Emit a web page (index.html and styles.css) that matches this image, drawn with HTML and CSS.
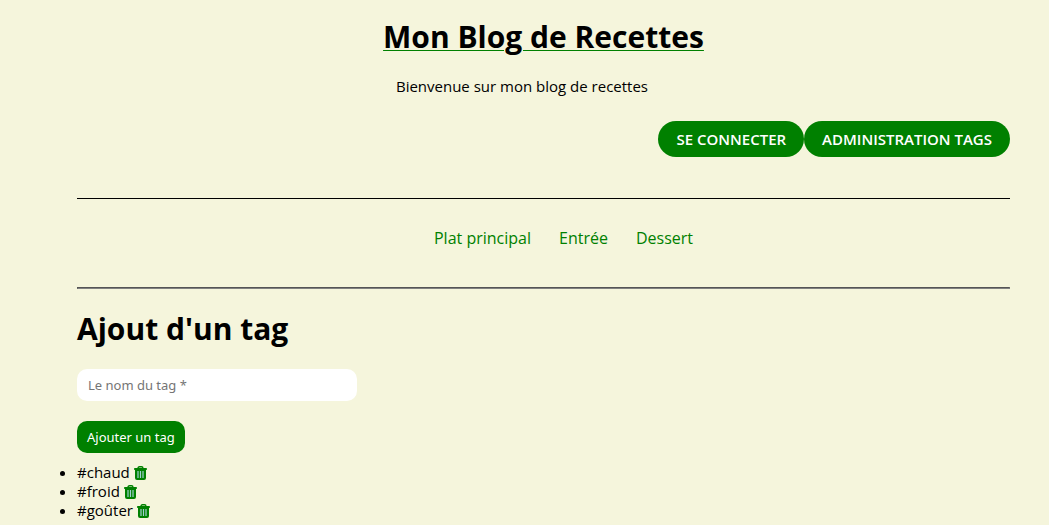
FILE: index.html
```html
<!DOCTYPE html>
<html lang="fr">
<head>
<meta charset="utf-8">
<title>Mon Blog de Recettes</title>
<link rel="stylesheet" href="styles.css">
</head>
<body>
<svg class="sprite" aria-hidden="true">
  <symbol id="trash" viewBox="0 0 13 14">
    <path d="M4 2.500Q4 .8 5.500 .8h2Q9 .8 9 2.500" fill="none" stroke="green" stroke-width="1.400"/>
    <path d="M.8 2h11.400q.8 0 .8 1t-.8 1H.8Q0 4 0 3t.8-1zM1 4h11v8q0 2-2 2H3q-2 0-2-2z" fill="green"/>
    <path d="M4 5v7M6.500 5v7M9 5v7" stroke="#9fcfd0" stroke-width="1.200"/>
  </symbol>
</svg>
<header class="header">
  <h1 class="site-title"><a href="#">Mon Blog de Recettes</a></h1>
  <p class="tagline">Bienvenue sur mon blog de recettes</p>
  <div class="actions">
    <a class="pill" href="#">Se connecter</a>
    <a class="pill" href="#">Administration tags</a>
  </div>
</header>
<nav class="nav">
  <ul class="nav-list">
    <li><a href="#">Plat principal</a></li>
    <li><a href="#">Entrée</a></li>
    <li><a href="#">Dessert</a></li>
  </ul>
</nav>
<hr class="rule">
<main>
  <h1 class="page-title">Ajout d'un tag</h1>
  <form class="form">
    <input class="field" type="text" aria-label="Le nom du tag" placeholder="Le nom du tag *">
    <button class="submit" type="submit">Ajouter un tag</button>
  </form>
  <ul class="tags">
    <li>#chaud <button class="delete" type="button" aria-label="Supprimer chaud"><svg><use href="#trash"/></svg></button></li>
    <li>#froid <button class="delete" type="button" aria-label="Supprimer froid"><svg><use href="#trash"/></svg></button></li>
    <li>#goûter <button class="delete" type="button" aria-label="Supprimer goûter"><svg><use href="#trash"/></svg></button></li>
  </ul>
</main>
</body>
</html>
```
FILE: styles.css
```css
* { box-sizing: border-box; }
body {
  margin: 0;
  padding: 18px 39px 0 77px;
  background: beige;
  color: #000;
  font: 15px/19px "Trebuchet MS", "Open Sans", sans-serif;
}
.sprite { display: none; }
.site-title, .page-title {
  margin: 0;
  font-size: 30px;
  font-weight: 700;
  line-height: 37px;
}
.site-title { text-align: center; }
.site-title a {
  color: #000;
  text-decoration-line: underline;
  text-decoration-color: #008000;
  text-decoration-thickness: 1px;
  text-underline-offset: 2px;
}
.tagline {
  margin: 22px 43px 25px 0;
  text-align: center;
}
.actions {
  display: flex;
  justify-content: flex-end;
}
.pill {
  padding: 8px 18px;
  border-radius: 20px;
  background: green;
  color: #fff;
  font-weight: 600;
  line-height: 20px;
  text-decoration: none;
  text-transform: uppercase;
}
.header {
  padding-bottom: 41px;
  border-bottom: 1px solid #000;
}
.nav { padding: 30px 0 39px; }
.nav-list {
  display: flex;
  justify-content: center;
  gap: 28px;
  margin: 0;
  padding: 0 0 0 40px;
  font-size: 16px;
  list-style: none;
}
.nav-list a { color: green; text-decoration: none; }
.rule {
  margin: 0;
  border: 1px solid #808080;
  border-top-color: #555;
  border-left-color: #555;
}
.page-title { margin: 21px 0 22px; }
.form {
  display: flex;
  flex-direction: column;
  align-items: flex-start;
  gap: 20px;
}
.field, .submit {
  height: 32px;
  padding: 0 10px;
  border: 0;
  border-radius: 10px;
  font: 13px "Noto Sans", sans-serif;
}
.field { width: 280px; padding: 0 11px; background: #fff; }
.field::placeholder { color: #757575; }
.submit { background: green; color: #fff; }
.tags { margin: 10px 0 0; padding: 0; }
.delete {
  padding: 0;
  border: 0;
  background: none;
  vertical-align: -2px;
  line-height: 0;
}
.delete svg { width: 13px; height: 14px; }
```
